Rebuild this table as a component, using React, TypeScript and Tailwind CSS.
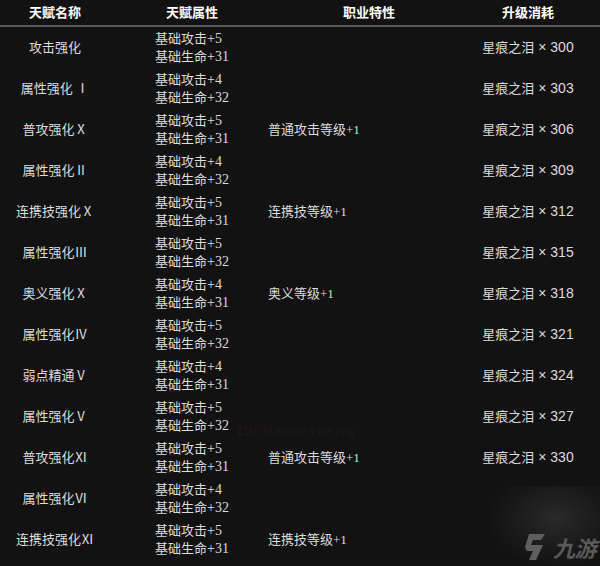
const rows = [
  { name: "攻击强化", atk: 5, hp: 31, trait: "", cost: "300" },
  { name: "属性强化 Ⅰ", atk: 4, hp: 32, trait: "", cost: "303" },
  { name: "普攻强化Ⅹ", atk: 5, hp: 31, trait: "普通攻击等级+1", cost: "306" },
  { name: "属性强化Ⅱ", atk: 4, hp: 32, trait: "", cost: "309" },
  { name: "连携技强化Ⅹ", atk: 5, hp: 31, trait: "连携技等级+1", cost: "312" },
  { name: "属性强化Ⅲ", atk: 5, hp: 32, trait: "", cost: "315" },
  { name: "奥义强化Ⅹ", atk: 4, hp: 31, trait: "奥义等级+1", cost: "318" },
  { name: "属性强化Ⅳ", atk: 5, hp: 32, trait: "", cost: "321" },
  { name: "弱点精通Ⅴ", atk: 4, hp: 31, trait: "", cost: "324" },
  { name: "属性强化Ⅴ", atk: 5, hp: 32, trait: "", cost: "327" },
  { name: "普攻强化Ⅺ", atk: 5, hp: 31, trait: "普通攻击等级+1", cost: "330" },
  { name: "属性强化Ⅵ", atk: 4, hp: 32, trait: "", cost: "" },
  { name: "连携技强化Ⅺ", atk: 5, hp: 31, trait: "连携技等级+1", cost: "" },
];

const cols = "grid grid-cols-[110px_152px_206px_120px]";

function Logo() {
  return (
    <div className="absolute right-0 bottom-0 w-[110px] h-[80px] flex items-end justify-end pr-1 pb-1">
      <div className="absolute inset-0 bg-[radial-gradient(ellipse_at_60%_40%,#2a2a2a_0%,#1a1a1a_45%,transparent_75%)]" />
      <div className="relative flex items-center gap-1 text-[#5a5a5a]">
        <svg width="26" height="30" viewBox="0 0 26 30" fill="#5e5e5e">
          <path d="M6 2 H22 L18 8 H10 L8 13 H20 L13 28 H6 L10 19 H4 L2 15 Z" />
        </svg>
        <span className="text-[22px] font-bold italic leading-none tracking-tight [font-family:'Noto_Sans_CJK_SC',sans-serif]">九游</span>
      </div>
    </div>
  );
}

export default function App() {
  return (
    <div className="relative w-[600px] h-[566px] overflow-hidden bg-[#121212] text-[13px] text-[#dcdcdc] [font-family:'Liberation_Serif','Noto_Sans_CJK_SC',serif]">
      <div className={cols + " h-[27px] items-center font-bold text-white border-b-2 border-[#5a5a5a]"}>
        <div className="text-center">天赋名称</div>
        <div className="text-center pl-3">天赋属性</div>
        <div className="text-center pl-2">职业特性</div>
        <div className="text-center">升级消耗</div>
      </div>
      {rows.map((r) => (
        <div key={r.name} className={cols + " h-[41px] items-center"}>
          <div className="text-center">{r.name}</div>
          <div className="pl-[45px] leading-[18px]">
            <div>基础攻击<span className="text-[14px]">+{r.atk}</span></div>
            <div>基础生命<span className="text-[14px]">+{r.hp}</span></div>
          </div>
          <div className="pl-[6px]">{r.trait}</div>
          <div className="text-center">
            {r.cost && (
              <>
                星痕之泪
                <span className="text-[14px] [font-family:'Liberation_Sans',sans-serif]"> × {r.cost}</span>
              </>
            )}
          </div>
        </div>
      ))}
      <div className="absolute left-[232px] top-[423px] text-[11px] text-[#221818] [font-family:'Liberation_Sans',sans-serif]">
        【1H]:5L]talent s tbe.png
      </div>
      <Logo />
    </div>
  );
}
